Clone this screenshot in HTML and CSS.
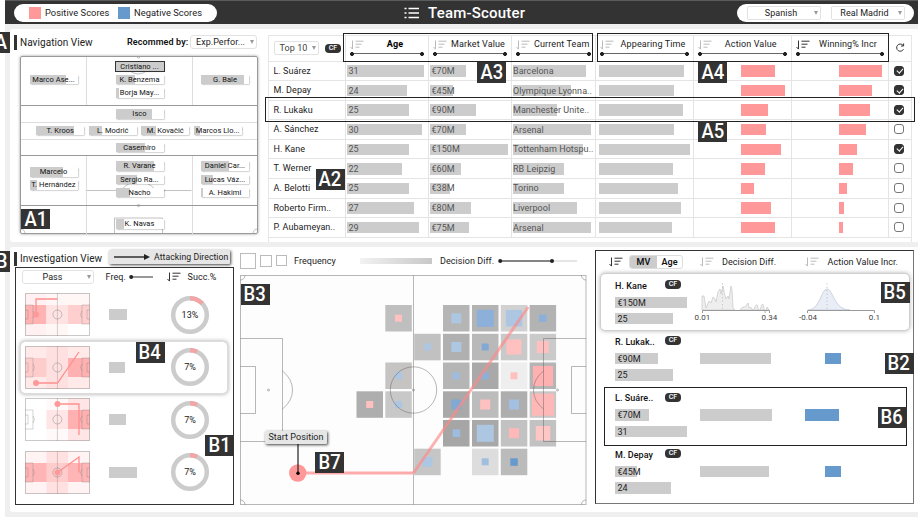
FILE: index.html
```html
<!DOCTYPE html>
<html lang="en">
<head>
<meta charset="utf-8">
<title>Team-Scouter</title>
<link rel="stylesheet" href="styles.css">
</head>
<body>
<svg class="defs" width="0" height="0">
  <symbol id="sort" viewBox="0 0 14 10"><path d="M2.5 0.5V9M0.5 7L2.5 9.2M5.5 1.2H13.5M5.5 4.2H11.5M5.5 7.2H9.5" fill="none" stroke="currentColor" stroke-width="1"/></symbol>
  <symbol id="mini" viewBox="0 0 65 43"><g fill="none" stroke="#777" stroke-opacity=".4"><rect x=".5" y=".5" width="64" height="42"/><path d="M32.4 0V43M0 12H8V31H0M0 17H3V26H0M65 12H57V31H65M65 17H62V26H65M8 18Q11 21.5 8 25M57 18Q54 21.5 57 25" stroke-width=".8"/><circle cx="32.4" cy="21.5" r="4.5"/></g></symbol>
</svg>
<div class="app">
  <header class="top">
    <div class="legend"><i class="sw pos"></i><span class="lg1">Positive Scores</span><i class="sw neg"></i><span>Negative Scores</span></div>
    <h1><svg width="15" height="12" viewBox="0 0 15 12"><path d="M4.5 1.5H15M4.5 6H15M4.5 10.5H15M0.5 1.5H2.5M0.5 6H2.5M0.5 10.5H2.5" stroke="#fff" stroke-width="1.3"/></svg><span>Team-Scouter</span></h1>
    <div class="filters"><div class="select"><span>Spanish</span><b class="caret"></b></div><div class="select"><span>Real Madrid</span><b class="caret"></b></div></div>
  </header>

  <section class="panel upper">
    <div class="nav">
      <div class="nav-head"><h2>Navigation View</h2><strong>Recommed by:</strong><div class="select"><span>Exp.Perfor...</span><b class="caret"></b></div></div>
      <div class="field">
        <svg class="field-lines" width="238" height="178" viewBox="0 0 238 178" fill="none" stroke="#999" stroke-opacity=".6">
          <path d="M65.500 134.500H171.500M101 134Q118 116 136 134M101 5Q118 31 136 5M94.500 178V162H142.500V178"/><circle cx="118.500" cy="149.500" r="1.200"/><circle cx="118.500" cy="1" r="1.200"/><path d="M0 173Q5 173 5 178M238 173Q233 173 233 178"/>
        </svg>
        <div class="line three tall">
          <div><p class="chip"><i style="width:36px"></i><span>Marco Ase...</span></p></div>
          <div class="mid"><p class="chip on"><i style="width:48px"></i><span>Cristiano ...</span></p><p class="chip"><i style="width:19px"></i><span>K. Benzema</span></p><p class="chip"><i style="width:3px"></i><span>Borja May...</span></p></div>
          <div><p class="chip"><i style="width:43px"></i><span>G. Bale</span></p></div>
        </div>
        <div class="line one"><p class="chip"><i style="width:36px"></i><span>Isco</span></p></div>
        <div class="line four"><p class="chip"><i style="width:38px"></i><span>T. Kroos</span></p><p class="chip"><i style="width:13px"></i><span>L. Modrić</span></p><p class="chip"><i style="width:15px"></i><span>M. Kovačić</span></p><p class="chip"><i style="width:6px"></i><span>Marcos Llo...</span></p></div>
        <div class="line one dark"><p class="chip"><i style="width:29px"></i><span>Casemiro</span></p></div>
        <div class="line three tall low">
          <div><p class="chip"><i style="width:33px"></i><span>Marcelo</span></p><p class="chip"><i style="width:7px"></i><span>T. Hernández</span></p></div>
          <div><p class="chip"><i style="width:38px"></i><span>R. Varane</span></p><p class="chip"><i style="width:21px"></i><span>Sergio Ra...</span></p><p class="chip"><i style="width:14px"></i><span>Nacho</span></p></div>
          <div><p class="chip"><i style="width:28px"></i><span>Daniel Car...</span></p><p class="chip"><i style="width:12px"></i><span>Lucas Váz...</span></p><p class="chip"><i style="width:2px"></i><span>A. Hakimi</span></p></div>
        </div>
        <div class="line three last"><div></div><div><p class="chip"><i style="width:8px"></i><span>K. Navas</span></p></div><div></div></div>
      </div>
    </div>

    <div class="table">
      <div class="tr head">
        <div class="pick"><div class="select"><span>Top 10</span><b class="caret"></b></div><em class="cf">CF</em></div>
        <div class="th strong"><svg class="so"><use href="#sort"/></svg><span>Age</span><hr></div>
        <div class="th"><svg class="so"><use href="#sort"/></svg><span>Market Value</span><hr></div>
        <div class="th"><svg class="so"><use href="#sort"/></svg><span>Current Team</span><hr></div>
        <div class="th"><svg class="so"><use href="#sort"/></svg><span>Appearing Time</span><hr></div>
        <div class="th"><svg class="so"><use href="#sort"/></svg><span>Action Value</span><hr></div>
        <div class="th"><svg class="so act"><use href="#sort"/></svg><span>Winning% Incr</span><hr></div>
        <div class="ck"><svg width="10" height="10" viewBox="0 0 10 10"><path d="M8 2.300A3.600 3.600 0 1 0 8.500 6.200M8.600 0.500V3H6" fill="none" stroke="#333"/></svg></div>
      </div>
      <div class="tr"><div class="name">L. Suárez</div><div class="td"><i style="width:77.500px"></i><span>31</span></div><div class="td"><i style="width:36px"></i><span>€70M</span></div><div class="td"><i style="width:73px"></i><span>Barcelona</span></div><div class="td ap"><i style="width:85.500px"></i></div><div class="td pk"><i style="width:34px"></i></div><div class="td pk"><i style="width:43px"></i></div><div class="ck"><u class="y"></u></div></div>
      <div class="tr"><div class="name">M. Depay</div><div class="td"><i style="width:60px"></i><span>24</span></div><div class="td"><i style="width:23.500px"></i><span>€45M</span></div><div class="td"><i style="width:58px"></i><span>Olympique Lyonna..</span></div><div class="td ap"><i style="width:75.500px"></i></div><div class="td pk"><i style="width:43.500px"></i></div><div class="td pk"><i style="width:33px"></i></div><div class="ck"><u class="y"></u></div></div>
      <div class="tr"><div class="name">R. Lukaku</div><div class="td"><i style="width:62.500px"></i><span>25</span></div><div class="td"><i style="width:46.500px"></i><span>€90M</span></div><div class="td"><i style="width:44px"></i><span>Manchester Unite..</span></div><div class="td ap"><i style="width:84.500px"></i></div><div class="td pk"><i style="width:27px"></i></div><div class="td pk"><i style="width:31px"></i></div><div class="ck"><u class="y"></u></div></div>
      <div class="tr"><div class="name">A. Sánchez</div><div class="td"><i style="width:75px"></i><span>30</span></div><div class="td"><i style="width:36px"></i><span>€70M</span></div><div class="td"><i style="width:78px"></i><span>Arsenal</span></div><div class="td ap"><i style="width:75.500px"></i></div><div class="td pk"><i style="width:25px"></i></div><div class="td pk"><i style="width:27px"></i></div><div class="ck"><u></u></div></div>
      <div class="tr"><div class="name">H. Kane</div><div class="td"><i style="width:62.500px"></i><span>25</span></div><div class="td"><i style="width:78px"></i><span>€150M</span></div><div class="td"><i style="width:70px"></i><span>Tottenham Hotspu..</span></div><div class="td ap"><i style="width:91px"></i></div><div class="td pk"><i style="width:39.500px"></i></div><div class="td pk"><i style="width:18px"></i></div><div class="ck"><u class="y"></u></div></div>
      <div class="tr"><div class="name">T. Werner</div><div class="td"><i style="width:55px"></i><span>22</span></div><div class="td"><i style="width:31px"></i><span>€60M</span></div><div class="td"><i style="width:51px"></i><span>RB Leipzig</span></div><div class="td ap"><i style="width:74px"></i></div><div class="td pk"><i style="width:23.500px"></i></div><div class="td pk"><i style="width:14.500px"></i></div><div class="ck"><u></u></div></div>
      <div class="tr"><div class="name">A. Belotti</div><div class="td"><i style="width:62.500px"></i><span>25</span></div><div class="td"><i style="width:20px"></i><span>€38M</span></div><div class="td"><i style="width:51px"></i><span>Torino</span></div><div class="td ap"><i style="width:79px"></i></div><div class="td pk"><i style="width:12.500px"></i></div><div class="td pk"><i style="width:8.500px"></i></div><div class="ck"><u></u></div></div>
      <div class="tr"><div class="name">Roberto Firm..</div><div class="td"><i style="width:67.500px"></i><span>27</span></div><div class="td"><i style="width:41.500px"></i><span>€80M</span></div><div class="td"><i style="width:64px"></i><span>Liverpool</span></div><div class="td ap"><i style="width:82px"></i></div><div class="td pk"><i style="width:29.500px"></i></div><div class="td pk"><i style="width:5px"></i></div><div class="ck"><u></u></div></div>
      <div class="tr"><div class="name">P. Aubameyan..</div><div class="td"><i style="width:72.500px"></i><span>29</span></div><div class="td"><i style="width:39px"></i><span>€75M</span></div><div class="td"><i style="width:78px"></i><span>Arsenal</span></div><div class="td ap"><i style="width:73.500px"></i></div><div class="td pk"><i style="width:33.500px"></i></div><div class="td pk"><i style="width:4.500px"></i></div><div class="ck"><u></u></div></div>
    </div>
  </section>

  <section class="panel lower">
    <div class="inv">
      <div class="inv-head"><h2>Investigation View</h2><div class="tag"><svg width="36" height="6" viewBox="0 0 36 6"><path d="M0 3H31" stroke="#222" stroke-width="1.400"/><path d="M30 0L36 3L30 6Z" fill="#222"/></svg>Attacking Direction</div></div>
      <div class="inv-box">
        <div class="inv-cols"><div class="select"><span>Pass</span><b class="caret"></b></div><span class="fr">Freq.</span><svg class="fs" width="24" height="6" viewBox="0 0 24 6"><path d="M2 3H24" stroke="#333"/><circle cx="2.200" cy="3" r="2" fill="#222"/></svg><svg class="so act"><use href="#sort"/></svg><span>Succ.%</span></div>
        <div class="pat"><svg width="65" height="43" viewBox="0 0 65 43"><path fill="#fff1f1" d="M0 0H21.500V12H0zM0 31H21.500V43H0z"/><path fill="#fff6f6" d="M21.500 0H65V12H21.500zM21.500 31H43V43H21.500z"/><path fill="#ffb3b3" d="M0 12H21.500V31H0z"/><path fill="#ffe3e3" d="M21.500 12H43V31H21.500z"/><path fill="#ffcfcf" d="M43 12H65V31H43z"/><use href="#mini"/><path class="run" d="M11 21.500V6H32.500"/><circle cx="11" cy="21.500" r="3" fill="#f99"/></svg><i style="width:18.500px"></i><div class="donut"><svg width="40" height="40" viewBox="0 0 40 40"><circle class="ring" cx="20" cy="20" r="16.800"/><circle class="arc" cx="20" cy="20" r="16.800" pathLength="100" stroke-dasharray="13 87"/></svg><span>13%</span></div></div>
        <div class="pat sel"><svg width="65" height="43" viewBox="0 0 65 43"><path fill="#ffe9e9" d="M0 0H65V43H0z"/><path fill="#ffe0e0" d="M21.500 0H43V43H21.500z"/><path fill="#ffcccc" d="M0 12H21.500V31H0z"/><path fill="#ffb0b0" d="M43 12H65V31H43z"/><use href="#mini"/><path class="run" d="M11 37H32.500L54 6"/><circle cx="11" cy="37" r="3" fill="#f99"/></svg><i style="width:16px"></i><div class="donut"><svg width="40" height="40" viewBox="0 0 40 40"><circle class="ring" cx="20" cy="20" r="16.800"/><circle class="arc" cx="20" cy="20" r="16.800" pathLength="100" stroke-dasharray="7 93"/></svg><span>7%</span></div></div>
        <div class="pat"><svg width="65" height="43" viewBox="0 0 65 43"><path fill="#fff9f9" d="M21.500 0H43V43H21.500z"/><path fill="#ffe5e5" d="M43 0H65V43H43zM21.500 12H43V31H21.500z"/><path fill="#ffb0b0" d="M43 12H65V31H43z"/><use href="#mini"/><path class="run" d="M32.500 6H54V37"/><circle cx="32.500" cy="6" r="3" fill="#f99"/></svg><i style="width:17.500px"></i><div class="donut"><svg width="40" height="40" viewBox="0 0 40 40"><circle class="ring" cx="20" cy="20" r="16.800"/><circle class="arc" cx="20" cy="20" r="16.800" pathLength="100" stroke-dasharray="7 93"/></svg><span>7%</span></div></div>
        <div class="pat"><svg width="65" height="43" viewBox="0 0 65 43"><path fill="#fff3f3" d="M0 0H65V43H0z"/><path fill="#ffe1e1" d="M21.500 0H43V43H21.500z"/><path fill="#ffb5b5" d="M0 12H65V31H0z"/><path fill="#ffcccc" d="M21.500 12H43V31H21.500z"/><use href="#mini"/><path class="run" d="M32.500 21.500L54 6V21.500"/><circle cx="32.500" cy="21.500" r="3" fill="#f99"/></svg><i style="width:28px"></i><div class="donut"><svg width="40" height="40" viewBox="0 0 40 40"><circle class="ring" cx="20" cy="20" r="16.800"/><circle class="arc" cx="20" cy="20" r="16.800" pathLength="100" stroke-dasharray="7 93"/></svg><span>7%</span></div></div>
      </div>
    </div>

    <div class="map">
      <div class="map-head"><i class="sq a"></i><i class="sq b"></i><i class="sq c"></i><span>Frequency</span><i class="grad"></i><span>Decision Diff.</span><svg width="80" height="6" viewBox="0 0 80 6"><path d="M2 3H79" stroke="#ccc"/><path d="M2 3H54" stroke="#222" stroke-width="1.200"/><circle cx="2.200" cy="3" r="2" fill="#222"/><circle cx="54" cy="3" r="2" fill="#222"/></svg></div>
      <svg class="pitch" width="347" height="230" viewBox="240 275 347 230">
        <rect x="240.500" y="275.500" width="345.500" height="229" fill="#fdfdfd"/>
        <g>
          <rect x="385.300" y="305" width="26.500" height="26.500" fill="#c0bfbf"/><rect x="443" y="305" width="26.500" height="26.500" fill="#b5b5b5"/><rect x="472" y="305" width="26.500" height="26.500" fill="#b3b3b3"/><rect x="500.800" y="305" width="26.500" height="26.500" fill="#d1d1d1"/><rect x="529.600" y="305" width="26.500" height="26.500" fill="#b3b3b3"/>
          <rect x="414.200" y="333.800" width="26.500" height="26.500" fill="#c1c1c1"/><rect x="443" y="333.800" width="26.500" height="26.500" fill="#b0b0b0"/><rect x="472" y="333.800" width="26.500" height="26.500" fill="#b9b9b9"/><rect x="500.800" y="333.800" width="26.500" height="26.500" fill="#c9c9c9"/><rect x="529.600" y="333.800" width="26.500" height="26.500" fill="#cacaca"/>
          <rect x="385.300" y="362.500" width="26.500" height="26.500" fill="#c6c3c3"/><rect x="443" y="362.500" width="26.500" height="26.500" fill="#b5b5b5"/><rect x="472" y="362.500" width="26.500" height="26.500" fill="#a9a9a9"/><rect x="500.800" y="362.500" width="26.500" height="26.500" fill="#eee"/><rect x="529.600" y="362.500" width="26.500" height="26.500" fill="#b5b5b5"/>
          <rect x="356.500" y="391.300" width="26.500" height="26.500" fill="#aeaeae"/><rect x="385.300" y="391.300" width="26.500" height="26.500" fill="#c8c8c8"/><rect x="443" y="391.300" width="26.500" height="26.500" fill="#a9a9a9"/><rect x="472" y="391.300" width="26.500" height="26.500" fill="#bcbcbc"/><rect x="500.800" y="391.300" width="26.500" height="26.500" fill="#aeaeae"/><rect x="529.600" y="391.300" width="26.500" height="26.500" fill="#cac6c6"/>
          <rect x="443" y="420" width="26.500" height="26.500" fill="#a6a6a6"/><rect x="472" y="420" width="26.500" height="26.500" fill="#a8a8a8"/><rect x="500.800" y="420" width="26.500" height="26.500" fill="#c2c2c2"/><rect x="529.600" y="420" width="26.500" height="26.500" fill="#c2c2c2"/>
          <rect x="414.200" y="448.700" width="26.500" height="26.500" fill="#c6c6c6"/><rect x="472" y="448.700" width="26.500" height="26.500" fill="#ddd"/><rect x="500.800" y="448.700" width="26.500" height="26.500" fill="#bbb"/>
        </g>
        <g fill="#ffc0c0">
          <rect x="395" y="314.700" width="7" height="7"/><rect x="506.500" y="339.500" width="15" height="15"/><rect x="536.800" y="341" width="12" height="12"/><rect x="510.500" y="372.300" width="7" height="7"/><rect x="533" y="366" width="20" height="20" fill="#ffb0b0"/><rect x="366.200" y="401" width="7" height="7"/><rect x="480.200" y="399.500" width="10" height="10"/><rect x="532" y="393.700" width="22" height="22" fill="#ffb8b8"/><rect x="509" y="428.200" width="10" height="10" fill="#ffb8b8"/><rect x="535.800" y="426" width="14.500" height="14.500" fill="#ffc6c6"/>
        </g>
        <g fill="#adc6e2">
          <rect x="451.300" y="313.300" width="10" height="10"/><rect x="476.800" y="309.800" width="17" height="17" fill="#8cb0da"/><rect x="505.800" y="310" width="16.500" height="16.500"/><rect x="539" y="314.500" width="7.500" height="7.500" fill="#8cb0da"/>
          <rect x="424" y="343.500" width="7" height="7"/><rect x="451.300" y="342" width="10" height="10"/><rect x="481.700" y="343.500" width="7" height="7" fill="#82a9d4"/>
          <rect x="395" y="372.300" width="7" height="7"/><rect x="452.700" y="372.300" width="7" height="7" fill="#9dbce0"/><rect x="481.700" y="372.300" width="7" height="7" fill="#8cb0da"/>
          <rect x="395" y="401" width="7" height="7"/><rect x="451.300" y="399.500" width="10" height="10" fill="#82a9d4"/><rect x="509" y="399.500" width="10" height="10" fill="#a3c0e2"/>
          <rect x="452.700" y="429.500" width="7.500" height="7.500" fill="#9dbce0"/><rect x="476.800" y="424.800" width="17" height="17"/><rect x="422.500" y="457" width="10" height="10"/><rect x="481.700" y="458.300" width="7" height="7" fill="#a0bfe0"/><rect x="510.300" y="458.300" width="7.500" height="7.500" fill="#6699cc"/>
        </g>
        <g fill="none" stroke="#555" stroke-opacity=".42">
          <rect x="240.500" y="275.500" width="345.500" height="229"/><path d="M413.500 275.500V504.500M240.500 338.500H282.500V441.500H240.500M240.500 366.500H255.500V413.500H240.500M586 338.500H543.500V441.500H586M586 366.500H571.500V413.500H586M282.500 371Q292.500 379 292.500 390T282.500 409M543.500 371Q533.500 379 533.500 390T543.500 409M240.500 280A4.500 4.500 0 0 0 245 275.500M581.500 275.500A4.500 4.500 0 0 0 586 280M240.500 500A4.500 4.500 0 0 1 245 504.500M581.500 504.500A4.500 4.500 0 0 1 586 500"/>
          <circle cx="413.500" cy="390" r="23.200"/><circle cx="413.500" cy="390" r="1"/><circle cx="268.500" cy="390" r="1"/><circle cx="557.500" cy="390" r="1"/>
        </g>
        <path d="M298 473H413.500" fill="none" stroke="#ffabab" stroke-width="3"/><path d="M413.500 473L528.200 307" fill="none" stroke="#f88" stroke-opacity=".65" stroke-width="3"/>
        <circle cx="297.700" cy="473" r="8.700" fill="#f99"/><path d="M298 444V473" stroke="#222" stroke-width="1.200"/><circle cx="298" cy="473.300" r="1.700" fill="#000"/>
      </svg>
    </div>

    <div class="cmp">
      <div class="cmp-head"><svg class="so act"><use href="#sort"/></svg><div class="toggle"><b>MV</b><span>Age</span></div><svg class="so s2"><use href="#sort"/></svg><span class="h1">Decision Diff.</span><svg class="so s3"><use href="#sort"/></svg><span class="h2">Action Value Incr.</span></div>
      <div class="pl card">
        <div class="who"><p>H. Kane<em class="cf">CF</em></p><div class="bar"><i style="width:72px"></i><span>€150M</span></div><div class="bar"><i style="width:57.500px"></i><span>25</span></div></div>
        <svg class="charts" width="200" height="44" viewBox="690 281 200 44">
          <path d="M702 311V297L704 297L706 309L709 302L711 304L713 298L715 300L716 303L718 293L720 290L721 295L723 287L724 293L726 300L728 297L729 300L731 287L732 291L733 309L735 311Z" fill="#eee" stroke="#ccc" stroke-width=".8"/>
          <path d="M740 311Q742 307 745 308L748 304L749 309Q751 307 752 310T755 308T758 309T761 308T764 310T767 308L769 311Z" fill="#eee" stroke="#ccc" stroke-width=".8"/>
          <path d="M808 311C820 311 821 290 827 290S834 311 850 311Z" fill="#e8edf6" stroke="#c3ccda" stroke-width=".8"/>
          <path d="M722.500 284V311M827 284V311" stroke="#bbb" stroke-width=".7" stroke-dasharray="1.500 2"/>
          <path d="M702.500 314V311.500H769.500V314M807.500 314V311.500H874.500V314" fill="none" stroke="#999"/>
          <g class="ax"><text x="702.500" y="320.800">0.01</text><text x="769.500" y="320.800">0.34</text><text x="808" y="320.800">-0.04</text><text x="874.500" y="320.800">0.1</text></g>
        </svg>
      </div>
      <div class="pl"><div class="who"><p>R. Lukak..<em class="cf">CF</em></p><div class="bar"><i style="width:43px"></i><span>€90M</span></div><div class="bar"><i style="width:57.500px"></i><span>25</span></div></div><div class="dd"><i style="width:71px"></i></div><div class="av"><i style="width:15.500px"></i></div></div>
      <div class="pl"><div class="who"><p>L. Suáre..<em class="cf">CF</em></p><div class="bar"><i style="width:33.500px"></i><span>€70M</span></div><div class="bar"><i style="width:72px"></i><span>31</span></div></div><div class="dd"><i style="width:72px"></i></div><div class="av wide"><i style="width:34px"></i></div></div>
      <div class="pl"><div class="who"><p>M. Depay<em class="cf">CF</em></p><div class="bar"><i style="width:22px"></i><span>€45M</span></div><div class="bar"><i style="width:55.500px"></i><span>24</span></div></div><div class="dd"><i style="width:69px"></i></div><div class="av"><i style="width:15.500px"></i></div></div>
    </div>
  </section>

  <div class="frame f3"></div><div class="frame f4"></div><div class="frame f5"></div><div class="frame f6"></div>
  <div class="tag start">Start Position</div>
  <div class="mark mA"><span>A</span></div><div class="mark mB"><span>B</span></div>
  <div class="mark a1"><span>A1</span></div><div class="mark a2"><span>A2</span></div><div class="mark a3"><span>A3</span></div><div class="mark a4"><span>A4</span></div><div class="mark a5"><span>A5</span></div>
  <div class="mark b1"><span>B1</span></div><div class="mark b2"><span>B2</span></div><div class="mark b3"><span>B3</span></div><div class="mark b4"><span>B4</span></div><div class="mark b5"><span>B5</span></div><div class="mark b6"><span>B6</span></div><div class="mark b7"><span>B7</span></div>
</div>
</body>
</html>
```

FILE: styles.css
```css
* { box-sizing: border-box; margin: 0; padding: 0; }
body { font: 400 9px/12px Roboto, "Liberation Sans", sans-serif; letter-spacing: .05px; color: #222; background: #fff; overflow: hidden; }
.defs { position: absolute; }
svg { display: block; flex: none; }
i, em, u { font-style: normal; text-decoration: none; flex: none; }
.app { position: relative; width: 918px; height: 517px; overflow: hidden; padding-left: 5px; }
h2 { font-size: 10px; font-weight: 400; white-space: nowrap; }

/* header */
.top { height: 24px; background: #333; border-top: 1px solid #5a5c5c; display: flex; align-items: center; }
.legend { width: 203px; height: 18px; margin-left: 9px; border-radius: 9px; background: #fff; display: flex; align-items: center; padding-left: 15px; font-size: 9.300px; }
.sw { width: 12px; height: 12px; margin-right: 4px; }
.pos { background: #f99; }
.neg { background: #69c; }
.lg1 { width: 73px; }
h1 { margin-left: 187px; display: flex; align-items: center; gap: 9px; color: #fff; font-size: 15px; font-weight: 500; width: 333px; letter-spacing: .2px; white-space: nowrap; }
.filters { width: 177px; height: 18px; border-radius: 9px; background: #fff; display: flex; align-items: center; padding-left: 10px; gap: 9.500px; }
.select { width: 74px; height: 14px; border: 1px solid #e2e2e2; border-radius: 2px; background: #fff; display: flex; align-items: center; white-space: nowrap; flex: none; }
.select span { flex: 1; text-align: center; }
.caret { width: 0; height: 0; border: 2px solid transparent; border-top: 4px solid #999; border-bottom: 0; margin-right: 2px; }

/* upper panel */
.app::before { content: ""; position: absolute; inset: 24px 0 0 5px; background: #efefef; z-index: -1; }
.panel { background: #fff; margin-left: 5px; border-radius: 3px 0 0 3px; display: flex; }
.upper { margin-top: 5px; height: 212.500px; }
.nav { width: 258px; padding: 5px 0 0 4px; }
.nav-head { display: flex; align-items: center; height: 16px; }
.nav-head h2 { border-left: 3.500px solid #333; height: 15px; line-height: 15px; padding-left: 3px; width: 113px; }
.nav-head strong { color: #111; font-weight: 600; letter-spacing: .1px; width: 63px; white-space: nowrap; }
.nav-head .select { width: 67px; border-radius: 3px; }
.field { position: relative; margin: 5.500px 0 0 6px; width: 238px; height: 178.500px; border: 1px solid #999; border-radius: 2px; box-shadow: 0 0 3px rgba(0,0,0,.4); }
.field-lines { position: absolute; left: -1px; top: -1px; }
.line { display: grid; position: relative; border-bottom: 1px solid #ddd; height: 17px; align-items: center; justify-items: center; }
.line.one { height: 16.500px; padding-left: 1px; }
.line.dark { border-color: #999; }
.three { grid-template-columns: 65px 106px 1fr; border-bottom-color: #999; }
.three > div { height: 100%; width: 100%; display: flex; flex-direction: column; align-items: center; justify-content: center; gap: 3.900px; padding-bottom: 2.500px; }
.three > div + div { border-left: 1px solid #ddd; }
.three.tall { height: 49.700px; }
.three .mid { justify-content: flex-start; padding-top: 5px; }
.low > div:first-child { padding-bottom: 4px; }
.three.last { height: 28px; border: 0; }
.three.last > div { justify-content: flex-end; padding-bottom: 5px; }
.four { grid-template-columns: repeat(4, 48px); justify-content: center; column-gap: 4.500px; }
.chip { position: relative; width: 48px; height: 9.500px; background: #fff; box-shadow: .5px .5px 1.500px rgba(0,0,0,.5); display: flex; justify-content: center; font-size: 7.500px; line-height: 9.500px; white-space: nowrap; color: #111; }
.chip i { position: absolute; left: 0; top: 0; height: 100%; background: #ccc; }
.chip span { position: relative; }
.chip.on { outline: 1px solid #333; }

/* player table */
.table { margin-top: 5.500px; width: 644px; border: 1px solid #e6e6e6; border-bottom: 0; }
.tr { display: grid; grid-template-columns: 75.500px 83px 83px 84.500px 98px 97.500px 97px 1fr; height: 19.580px; border-bottom: 1px solid #e4e4e4; }
.tr > div + div { border-left: 1px solid #e4e4e4; }
.tr.head { height: 26px; }
.pick { display: flex; align-items: center; padding-left: 5px; gap: 6px; }
.pick .select { width: 45px; color: #444; }
.cf { display: inline-block; width: 16px; height: 9px; border-radius: 4px; background: #333; color: #fff; font-size: 7px; line-height: 9px; text-align: center; font-weight: 500; }
.th { padding: 2.500px 4px 0 4px; display: grid; grid-template-columns: 17px 1fr; align-content: start; text-align: center; white-space: nowrap; letter-spacing: .12px; }
.th .so { margin-top: 1.500px; }
.th.strong { font-weight: 700; color: #000; }
.th hr { grid-column: 1 / 3; border: 0; height: 4px; margin-top: 2px; background: radial-gradient(circle at 2px 2px, #222 1.800px, transparent 2.200px), radial-gradient(circle at calc(100% - 2px) 2px, #222 1.800px, transparent 2.200px), linear-gradient(#666, #666) 0 50% / 100% 1.200px no-repeat; }
.so { width: 14px; height: 10px; color: #bbb; }
.so.act { color: #333; }
.name { padding-left: 4.500px; line-height: 19px; white-space: nowrap; }
.td { position: relative; display: flex; align-items: center; padding-left: 1px; white-space: nowrap; color: #555; }
.td i { height: 11.500px; background: #ccc; }
.td span { position: absolute; left: 1.500px; line-height: 12px; }
.td:nth-child(-n+3) span { left: 3px; }
.td.ap { padding-left: 2.500px; }
.td.pk { padding-left: 47px; }
.td.pk i { background: #f99; }
.ck { display: flex; align-items: center; justify-content: center; }
.ck u { width: 10px; height: 10px; border: 1px solid #777; border-radius: 3px; margin: 0 1px 1px 0; }
.ck .y { background: #333; border-color: #333; position: relative; }
.y::after { content: ""; position: absolute; left: 2.500px; top: .5px; width: 2.500px; height: 5px; border: solid #fff; border-width: 0 1.200px 1.200px 0; transform: rotate(42deg); }

/* lower panel */
.lower { margin-top: 5px; height: 265.500px; }
.inv { width: 230px; padding: 4px 0 0 4px; }
.inv-head { display: flex; align-items: center; height: 16px; }
.inv-head h2 { border-left: 3.500px solid #333; height: 14px; line-height: 14px; padding-left: 3px; width: 95px; }
.tag { background: #e6e6e6; box-shadow: 1px 1px 3px rgba(0,0,0,.75); border-radius: 1px; height: 13.500px; display: flex; align-items: center; white-space: nowrap; color: #222; }
.inv-head .tag { width: 121px; padding-left: 5px; gap: 4px; margin-top: -3px; font-size: 8.700px; }
.inv-box { margin: .5px 0 0 1px; width: 219px; height: 237.500px; border: 1.500px solid #333; }
.inv-cols { display: flex; align-items: center; height: 18px; padding-left: 5.500px; }
.inv-cols .select { width: 72px; border-radius: 3px; }
.inv-cols .select span { padding-right: 4px; }
.fr { margin-left: 12px; width: 23.500px; }
.fs { margin-right: 13.500px; }
.inv-cols .so { margin-right: 7px; }
.pat { display: grid; grid-template-columns: 83.500px 61.500px 40px; align-items: center; margin-left: 5px; width: 206px; height: 51px; margin-bottom: 1.650px; padding-left: 4px; border-radius: 4px; }
.inv-cols + .pat { margin-top: 3px; }
.pat.sel { box-shadow: 0 0 0 1px #ddd, 0 0 4px 1px rgba(0,0,0,.35); }
.pat > i { height: 11px; background: #ccc; }
.run { fill: none; stroke: #ff8f8f; stroke-width: 1.300; }
.donut { display: grid; place-items: center; }
.donut > * { grid-area: 1 / 1; }
.ring, .arc { fill: none; stroke: #ccc; stroke-width: 4.500; }
.arc { stroke: #f2a5a5; transform: rotate(-90deg); transform-origin: 20px 20px; }
.map { width: 347px; }
.map-head { display: flex; align-items: center; height: 28.500px; }
.sq { border: 1px solid #bbb; }
.sq.a { width: 15.500px; height: 15.500px; margin-right: 4px; }
.sq.b { width: 12.500px; height: 12.500px; margin-right: 4px; }
.sq.c { width: 11px; height: 11px; margin-right: 7px; }
.map-head span { white-space: nowrap; width: 66px; }
.grad { width: 72px; height: 6px; margin-right: 8px; background: linear-gradient(90deg, #f2f2f2, #c8c8c8); }
.map-head span:nth-of-type(2) { width: 57.500px; }

/* comparison */
.cmp { margin: 3px 0 0 8px; width: 319px; height: 254.500px; border: 1.500px solid #333; border-right-color: #777; border-bottom-color: #777; }
.cmp-head { display: flex; align-items: center; height: 23px; padding-left: 12.500px; white-space: nowrap; }
.toggle { display: flex; width: 54px; height: 14.500px; border: 1px solid #ddd; border-radius: 3px; margin-left: 6.500px; line-height: 13px; text-align: center; color: #111; overflow: hidden; }
.toggle b { width: 27px; background: #ccc; font-weight: 600; }
.toggle span { flex: 1; font-weight: 600; }
.s2 { margin-left: 17px; }
.s3 { margin-left: 6px; }
.h1 { margin-left: 8px; width: 77px; }
.h2 { margin-left: 8.500px; }
.pl { position: relative; display: flex; height: 56.450px; padding-left: 19px; }
.card { margin: 0 0 0 5px; padding-left: 14px; width: 308px; border-radius: 4px; box-shadow: 0 0 0 .5px #ccc, 0 0 4px 1px rgba(0,0,0,.3); }
.who { width: 85px; padding-top: 5px; color: #222; }
.who p { display: flex; justify-content: space-between; width: 66px; height: 18px; line-height: 14px; color: #111; white-space: nowrap; font-weight: 500; }
.who .cf { margin-top: 1.500px; }
.bar { position: relative; height: 11.500px; margin-bottom: 4.800px; }
.bar i { display: block; height: 100%; background: #ccc; }
.bar span { position: absolute; left: 2.500px; top: 0; line-height: 12px; }
.charts { margin: 6px 0 0 -10.500px; }
.ax text { font-size: 8px; font-weight: 400; fill: #444; text-anchor: middle; }
.dd, .av { padding-top: 23px; }
.dd { width: 125px; }
.av.wide { margin-left: -20px; }
.dd i, .av i { display: block; height: 11.500px; background: #ccc; }
.av i { background: #69c; }

/* annotation overlay */
.frame { position: absolute; border: 1.500px solid #222; }
.f3 { left: 343px; top: 32.500px; width: 250px; height: 29.500px; }
.f4 { left: 597px; top: 32.500px; width: 292px; height: 29.500px; }
.f5 { left: 265px; top: 97px; width: 650px; height: 25px; }
.f6 { left: 604px; top: 387px; width: 303px; height: 59px; }
.start { position: absolute; left: 265px; top: 430.500px; width: 62px; justify-content: center; }
.mark { position: absolute; width: 29px; height: 20.500px; background: #333; color: #fff; font-size: 21px; line-height: 20.500px; font-weight: 500; display: flex; justify-content: center; }
.mark span { transform: scaleX(.88); }
.mA, .mB { width: 10px; left: 0; justify-content: flex-end; padding-right: 2px; }
.mA { top: 32px; } .mB { top: 251px; }
.a1 { left: 21px; top: 208.500px; } .a2 { left: 315.500px; top: 169px; } .a3 { left: 477px; top: 62px; } .a4 { left: 698px; top: 62px; } .a5 { left: 698px; top: 121px; }
.b1 { left: 205px; top: 435px; } .b2 { left: 884.500px; top: 353px; } .b3 { left: 240.500px; top: 284px; } .b4 { left: 135.500px; top: 342px; } .b5 { left: 880.500px; top: 282px; } .b6 { left: 877.500px; top: 407px; } .b7 { left: 315px; top: 452px; }
```
